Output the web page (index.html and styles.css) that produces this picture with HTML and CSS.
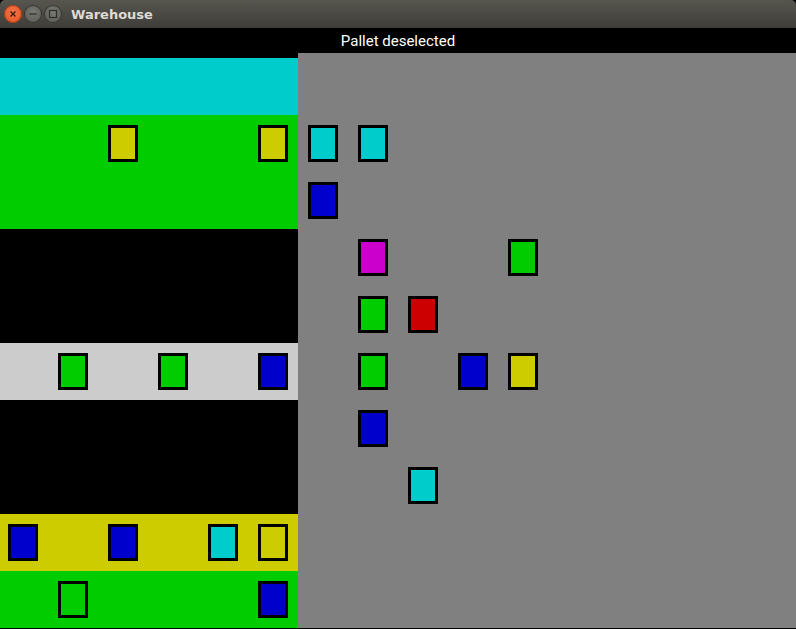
FILE: index.html
```html
<!DOCTYPE html>
<html>
<head>
<meta charset="utf-8">
<title>Warehouse</title>
<link rel="stylesheet" href="styles.css">
</head>
<body>
<div class="window">
  <div class="titlebar">
    <div class="buttons">
      <span class="btn close"><svg width="18" height="18" viewBox="0 0 18 18"><path d="M6.5 6.5 L11.5 11.5 M11.5 6.5 L6.5 11.5" stroke="#3a1a0a" stroke-width="1.3" fill="none"/></svg></span>
      <span class="btn"><svg width="18" height="18" viewBox="0 0 18 18"><path d="M5.5 9 H12.5" stroke="#2e2e2b" stroke-width="1.3" fill="none"/></svg></span>
      <span class="btn"><svg width="18" height="18" viewBox="0 0 18 18"><rect x="5.5" y="5.5" width="7" height="7" stroke="#2e2e2b" stroke-width="1.2" fill="none"/></svg></span>
    </div>
    <div class="title">Warehouse</div>
  </div>
  <div class="status">Pallet deselected</div>
  <div class="main">
    <div class="left">
      <div class="row cyan"></div>
      <div class="row green">
        <div class="pallet yellow c2"></div>
        <div class="pallet yellow c5"></div>
      </div>
      <div class="row green"></div>
      <div class="row black"></div>
      <div class="row black"></div>
      <div class="row lightgray">
        <div class="pallet green c1"></div>
        <div class="pallet green c3"></div>
        <div class="pallet blue c5"></div>
      </div>
      <div class="row black"></div>
      <div class="row black"></div>
      <div class="row yellow">
        <div class="pallet blue c0"></div>
        <div class="pallet blue c2"></div>
        <div class="pallet cyan c4"></div>
        <div class="pallet yellow c5"></div>
      </div>
      <div class="row green">
        <div class="pallet green c1"></div>
        <div class="pallet blue c5"></div>
      </div>
    </div>
    <div class="right">
      <div class="row"></div>
      <div class="row">
        <div class="pallet cyan c0"></div>
        <div class="pallet cyan c1"></div>
      </div>
      <div class="row">
        <div class="pallet blue c0"></div>
      </div>
      <div class="row">
        <div class="pallet magenta c1"></div>
        <div class="pallet green c4"></div>
      </div>
      <div class="row">
        <div class="pallet green c1"></div>
        <div class="pallet red c2"></div>
      </div>
      <div class="row">
        <div class="pallet green c1"></div>
        <div class="pallet blue c3"></div>
        <div class="pallet yellow c4"></div>
      </div>
      <div class="row">
        <div class="pallet blue c1"></div>
      </div>
      <div class="row">
        <div class="pallet cyan c2"></div>
      </div>
      <div class="row"></div>
      <div class="row"></div>
    </div>
  </div>
</div>
</body>
</html>
```

FILE: styles.css
```css
html, body {
  margin: 0;
  padding: 0;
  background: #000;
  overflow: hidden;
}
.window {
  width: 796px;
  height: 629px;
  background: #000;
  display: flex;
  flex-direction: column;
}
.titlebar {
  height: 28px;
  flex: none;
  display: flex;
  align-items: center;
  background: linear-gradient(#57554e, #3e3d39);
  border-radius: 5px 5px 0 0;
}
.buttons {
  display: flex;
  gap: 2px;
  padding-left: 4px;
}
.btn {
  width: 18px;
  height: 18px;
  border-radius: 50%;
  background: radial-gradient(circle at 50% 40%, #7a7a75, #55554f);
  box-shadow: inset 0 0 0 1px #34332f;
  display: flex;
}
.btn.close {
  background: radial-gradient(circle at 50% 40%, #f47549, #e0501f);
  box-shadow: inset 0 0 0 1px #9c3b16;
}
.title {
  margin-left: 9px;
  font-family: "DejaVu Sans", sans-serif;
  font-weight: bold;
  font-size: 13px;
  color: #dfdbd2;
}
.status {
  height: 24px;
  padding-top: 1px;
  flex: none;
  color: #fff;
  font-family: Roboto, "Noto Sans", sans-serif;
  font-size: 15px;
  text-align: center;
  line-height: 25px;
}
.main {
  display: flex;
  height: 575px;
  flex: none;
}
.left {
  width: 298px;
  padding-top: 5px;
  flex: none;
}
.right {
  flex: 1;
  background: #808080;
  padding-top: 5px;
}
.row {
  height: 57px;
  display: grid;
  grid-template-columns: repeat(6, 50px);
  align-items: center;
}
.left .row { padding-left: 8px; }
.right .row { padding-left: 10px; }
.pallet {
  width: 30px;
  height: 37px;
  box-sizing: border-box;
  border: 3px solid #000;
  grid-row: 1;
}
.c0 { grid-column: 1; }
.c1 { grid-column: 2; }
.c2 { grid-column: 3; }
.c3 { grid-column: 4; }
.c4 { grid-column: 5; }
.c5 { grid-column: 6; }
.cyan { background: #00cccc; }
.green { background: #00cc00; }
.yellow { background: #cccc00; }
.blue { background: #0000cc; }
.magenta { background: #cc00cc; }
.red { background: #cc0000; }
.lightgray { background: #cccccc; }
.black { background: #000; }
```
